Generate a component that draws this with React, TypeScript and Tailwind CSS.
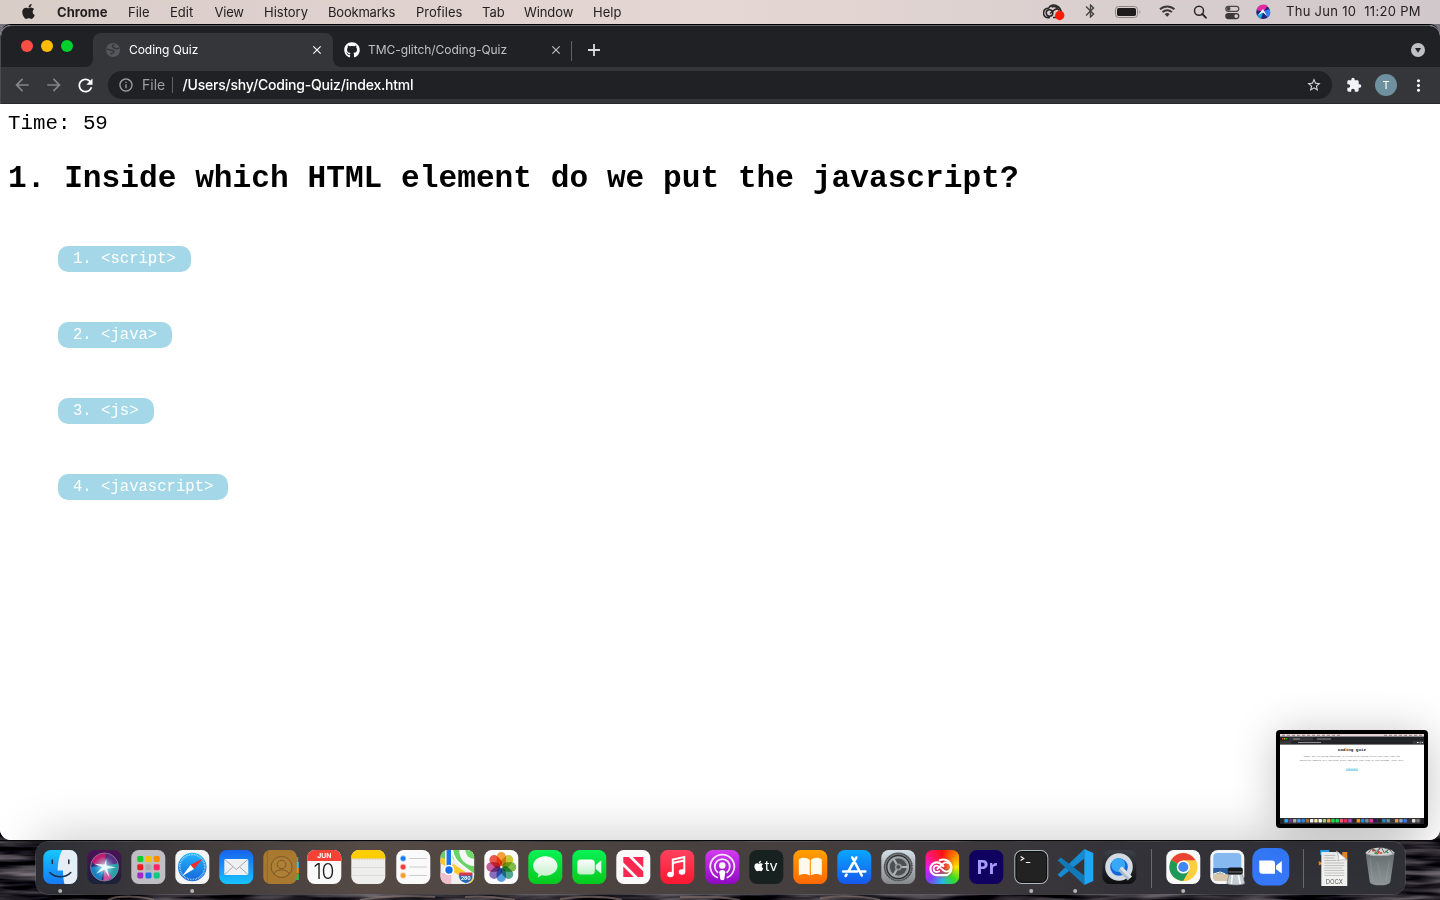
import React from "react";
import { FaApple, FaGithub } from "react-icons/fa";
import {
  MdArrowBack,
  MdArrowForward,
  MdBluetooth,
  MdClose,
  MdExtension,
  MdInfoOutline,
  MdMoreVert,
  MdRefresh,
  MdStarBorder,
} from "react-icons/md";

const menus = [
  { label: "Chrome", cls: "w-[71px] font-bold tracking-[0.05px]" },
  { label: "File", cls: "w-[42px]" },
  { label: "Edit", cls: "w-[44.5px]" },
  { label: "View", cls: "w-[49.5px] tracking-[-0.2px]" },
  { label: "History", cls: "w-[64px]" },
  { label: "Bookmarks", cls: "w-[88px] tracking-[-0.2px]" },
  { label: "Profiles", cls: "w-[66px]" },
  { label: "Tab", cls: "w-[42px]" },
  { label: "Window", cls: "w-[69px] tracking-[-0.1px]" },
  { label: "Help", cls: "w-[40px]" },
];

function MenuBar() {
  return (
    <header className="flex h-6 shrink-0 items-center bg-linear-to-r from-[#d9cdc8] via-[#e5d7d3] to-[#d0c8cb] text-[13px] text-[#242021]">
      <FaApple className="mt-[-1px] mr-[20px] ml-[20px] h-[17px] w-[17px]" />
      <nav className="flex pt-[2px]">
        {menus.map((m) => (
          <span key={m.label} className={m.cls}>
            {m.label}
          </span>
        ))}
      </nav>
      <div className="ml-auto flex items-center">
        <svg width="396" height="24" viewBox="0 0 396 24" className="mr-[-153px]" fill="none">
          <g stroke="#2b2627" strokeWidth="1.6" transform="translate(-1 1)">
            <path d="M8 16.5C4 17.5 1.500 15 1.500 12.300C1.500 9 4 7 6.500 7.200C8 3.800 13 3 16 5.500C18 7 19 9 19.500 11" />
            <circle cx="7.500" cy="12" r="3.300" />
            <path d="M8 12.500L13 8.500C15 7.400 16.500 8 17.500 9.500M9.500 6C12 4.800 14.500 5.600 16 7.500M11 16.500H14" />
          </g>
          <circle cx="16.700" cy="15.500" r="4.700" fill="#ff1a00" />
          <MdBluetooth x="39" y="2.500" size="17" color="#4a4546" />
          <rect x="72.500" y="6.500" width="22" height="11" rx="3" stroke="#8c8586" />
          <rect x="74" y="8" width="19" height="8" rx="1.800" fill="#1f1b1c" />
          <path d="M96.500 10.200c1.300.5 1.300 3.100 0 3.600z" fill="#8c8586" />
          <g stroke="#3c3738" strokeWidth="2" transform="translate(124.200 0)">
            <path d="M-7.200 9.300a10.500 10.500 0 0 1 14.400 0M-4.700 12.100a6.800 6.800 0 0 1 9.400 0" />
            <path d="M-2.500 14.300a3.600 3.600 0 0 1 5 0L0 16.700z" fill="#3c3738" stroke="none" />
          </g>
          <circle cx="156" cy="10.700" r="4.500" stroke="#2b2627" strokeWidth="1.500" />
          <path d="M159.300 14l3.600 3.700" stroke="#2b2627" strokeWidth="1.900" strokeLinecap="round" />
          <rect x="182.800" y="6.300" width="13" height="5" rx="2.500" stroke="#4a4546" strokeWidth="1.200" />
          <circle cx="185.500" cy="8.800" r="2" fill="#4a4546" />
          <rect x="182.200" y="13" width="14.200" height="6.200" rx="3.100" fill="#3c3738" />
          <circle cx="193.200" cy="16.100" r="1.900" fill="#d5cbcc" />
          <circle cx="220.200" cy="12" r="7" fill="#26257a" />
          <path d="M213.500 10a7 7 0 0 1 11-4.200l-4 6z" fill="#e32ba0" />
          <path d="M214 15a7 7 0 0 0 4 3.600l2.500-7z" fill="#1aa7e0" />
          <path d="M226.500 9a7 7 0 0 1-2 8.500l-4.500-6z" fill="#397ee8" />
          <path d="M215 15l5-6 4 7-4-3.500z" fill="#e9fbff" />
        </svg>
        <span className="w-[154px] whitespace-pre text-[13px] tracking-[0.3px]">Thu Jun 10  11:20 PM</span>
      </div>
    </header>
  );
}

function TabStrip() {
  return (
    <div className="flex h-[42px] items-end bg-[#202124]">
      <div className="flex h-[42px] w-[84px] items-center gap-2 pl-5">
        <i className="size-3 rounded-full bg-[#ff4f44]" />
        <i className="size-3 rounded-full bg-[#ffbd00]" />
        <i className="size-3 rounded-full bg-[#00d02b]" />
      </div>
      <svg width="8" height="8" className="shrink-0">
        <path d="M0 8A8 8 0 0 0 8 0V8z" fill="#35363a" />
      </svg>
      <div className="flex h-[34px] w-[240px] items-center rounded-t-lg bg-[#35363a] pl-[12px] text-[12px] text-white">
        <svg width="16" height="16" viewBox="0 0 16 16" className="mr-2 shrink-0">
          <circle cx="8" cy="8" r="7" fill="#55585d" />
          <path d="M1.500 7.500C4 6.500 4.500 8.500 7 8.300c2 0 2.300 1.800 1 2.600-1 .6-2.300.4-2.600 1.500M9.500 2.500C7 3 7 5 8.500 5.500s2 1.500 3.500 1.200l2-.5" stroke="#36373b" strokeWidth="1.700" fill="none" />
        </svg>
        <span className="tracking-[-0.05px]">Coding Quiz</span>
        <MdClose className="mr-[9px] ml-auto h-[14px] w-[14px] stroke-current" />
      </div>
      <svg width="8" height="8" className="shrink-0">
        <path d="M8 8A8 8 0 0 1 0 0V8z" fill="#35363a" />
      </svg>
      <div className="flex h-[34px] w-[230px] items-center pl-[3px] text-[12px] text-[#bdc1c6]">
        <FaGithub className="mr-2 h-4 w-4 text-white" />
        <span className="tracking-[-0.05px]">TMC-glitch/Coding-Quiz</span>
        <MdClose className="mr-[8px] ml-auto h-[14px] w-[14px] stroke-current" />
      </div>
      <i className="mb-[6px] h-5 w-px bg-[#5f6368]" />
      <svg width="12" height="12" className="mb-[11px] ml-[16px]">
        <path d="M6 0V12M0 6H12" stroke="#dadce0" strokeWidth="1.800" />
      </svg>
      <svg width="14" height="14" className="mr-[15px] mb-[10px] ml-auto">
        <circle cx="7" cy="7" r="7" fill="#bdc1c6" />
        <path d="M3.900 5h6.200L7 9.800z" fill="#202124" />
      </svg>
    </div>
  );
}

function Toolbar() {
  return (
    <div className="flex h-[37px] items-center border-b border-[#28272a] bg-[#35363a]">
      <MdArrowBack className="ml-[11px] h-5 w-5 text-[#828488]" />
      <MdArrowForward className="ml-[12px] h-5 w-5 text-[#828488]" />
      <MdRefresh className="ml-[11px] h-[21px] w-[21px] text-white" />
      <div className="ml-[12px] flex h-7 w-[1224px] items-center rounded-full bg-[#202124] text-[14px]">
        <MdInfoOutline className="ml-[10px] h-4 w-4 text-[#9aa0a6]" />
        <span className="mb-[2px] ml-2 w-[30px] text-[#9aa0a6]">File</span>
        <i className="h-4 w-px bg-[#5f6368]" />
        <span className="mb-[2px] ml-[9.5px] text-[14px] font-medium tracking-[-0.2px] text-white">/Users/shy/Coding-Quiz/index.html</span>
        <MdStarBorder className="mr-[10px] ml-auto h-4 w-4 text-[#d5d7da]" />
      </div>
      <MdExtension className="ml-[14px] h-4 w-4 text-[#f1f3f4]" />
      <span className="ml-[13px] flex size-[22px] items-center justify-center rounded-full bg-[#6f909f] text-[11px] text-white">T</span>
      <MdMoreVert className="ml-[12px] h-[19px] w-[19px] text-white" />
    </div>
  );
}

const answers = ["<script>", "<java>", "<js>", "<javascript>"];

function Quiz() {
  return (
    <main className="flex-1 bg-white pt-2 pl-2 font-['Courier_New','Liberation_Mono',monospace] text-black">
      <p className="h-[24px] text-[20.8px] leading-[24px]">Time: 59</p>
      <h1 className="mt-[25px] text-[31.2px] leading-[36px] font-bold whitespace-nowrap">
        1. Inside which HTML element do we put the javascript?
      </h1>
      <div className="mt-[49px] ml-[50px] flex flex-col items-start gap-[50px]">
        {answers.map((a, i) => (
          <button key={a} className="h-[26px] rounded-[10px] bg-[#a4d8e8] px-[15px] text-[15.6px] leading-[26px] text-white">
            {i + 1}. {a}
          </button>
        ))}
      </div>
    </main>
  );
}

const miniColors = ["#29a8f5", "#633d85", "#aaa", "#3e9bf0", "#2288ef", "#9b712d", "#eee", "#f4e7a4", "#fff", "#9fcc80", "#ef9f55", "#20d84b", "#20d84b", "#f35872", "#f32657", "#b342d0", "#222", "#f99121", "#168df2", "#888", "#e83a9a", "#251366", "#222", "#2485c4", "#68899d", "#33343a", "#dd9d53", "#87a6cf", "#3678ef", "#33343a", "#ddd", "#777"];

function Thumbnail() {
  return (
    <aside className="absolute top-[730px] left-[1276px] h-[98px] w-[152px] rounded-[4px] bg-black p-1 shadow-[0_4px_44px_rgba(0,0,0,0.24)]">
      <svg width="144" height="90" viewBox="0 0 144 90">
        <rect width="144" height="90" fill="#fff" />
        <rect width="144" height="2.500" fill="#e4d4d5" />
        <path d="M2 1.300H62M104 1.300H142" stroke="#8c7e80" strokeWidth="1" strokeDasharray="3 2" />
        <rect y="2.500" width="144" height="8" fill="#202124" />
        <rect x="9" y="3.500" width="24" height="3.200" fill="#35363a" />
        <rect y="6.700" width="144" height="3.500" fill="#35363a" />
        <rect x="11" y="7.200" width="122" height="2.600" rx="1.300" fill="#202124" />
        <path d="M13 5H20M37 5H51M18 8.500H41" stroke="#aaa" strokeWidth=".8" />
        <circle cx="2.700" cy="4.800" r=".8" fill="#ff4f44" />
        <circle cx="4.700" cy="4.800" r=".8" fill="#ffbd00" />
        <circle cx="6.700" cy="4.800" r=".8" fill="#00d02b" />
        <path d="M137 8.500h1.500M142 8.500h.8" stroke="#fff" />
        <circle cx="140.500" cy="8.500" r="1" fill="#7896a3" />
        <g fontFamily="Liberation Mono, monospace" textAnchor="middle" fill="#111">
          <text x="72" y="17" fontSize="4.200" fontWeight="700" textLength="28">Coding Quiz</text>
          <text x="72" y="22.700" fontSize="2" textLength="98" fill="#555">Answer the following questions in relation to coding before the time runs out.</text>
          <text x="72" y="27" fontSize="2" textLength="104" fill="#555">Incorrect answers will decrease score and dock your time by ten seconds. Good luck!</text>
        </g>
        <rect x="66" y="34.500" width="12" height="2.600" rx=".6" fill="#9edcec" />
        <rect y="84" width="144" height="6" fill="#21212a" />
        <rect x="3.600" y="84.300" width="137" height="5.200" rx="1" fill="#3d393b" />
        {miniColors.map((c, i) => (
          <rect key={i} x={4.5 + i * 4.25} y="85" width="3.400" height="3.400" rx=".7" fill={c} />
        ))}
      </svg>
    </aside>
  );
}

/* Every dock icon is drawn on a 34 by 34 grid. */
function Tile({ fill = "#fff" }: { fill?: string }) {
  return <rect width="34" height="34" rx="7.500" fill={fill} />;
}

const petals = [
  ["#f7941d", 0], ["#c9c417", 45], ["#72b52d", 90], ["#369c80", 135],
  ["#4493e3", 180], ["#7a5bb4", 225], ["#c4478e", 270], ["#ed3f38", 315],
] as const;

const apps: { name: string; open?: boolean; art: React.ReactNode }[] = [
  {
    name: "Finder", open: true,
    art: (
      <>
        <Tile fill="url(#finder)" />
        <path d="M19 0h7.500A7.500 7.500 0 0 1 34 7.500v19a7.500 7.500 0 0 1-7.500 7.500h-5.300c-.9-4-1.400-7-1.500-13.500h-5.400C14.500 13 16 5 19 0z" fill="#e6edf5" />
        <path d="M9 10v3.500M25.500 10v3.500M6.500 22.500c5.500 5.700 15.500 5.700 21 0" stroke="#17304a" strokeWidth="1.500" strokeLinecap="round" fill="none" />
      </>
    ),
  },
  {
    name: "Siri",
    art: (
      <>
        <Tile fill="url(#siribg)" />
        <circle cx="17.200" cy="17" r="14" fill="#33306a" />
        <g clipPath="url(#orb)">
          <path d="M17 16C11 15 4 14 3 10c3-6 10-9 16-7z" fill="#c31b6f" />
          <path d="M17 16l4-14c6 2 11 8 11 12z" fill="#5a2f86" />
          <path d="M17 16L3 17c0 8 6 14 11 14z" fill="#1581c4" />
          <path d="M17 16l15-3c1 9-3 15-8 17z" fill="#27a0a5" />
          <path d="M17 16l-1 15c4 0 8-1 8-5z" fill="#d04d9f" />
          <circle cx="17" cy="17" r="11" fill="url(#glow)" />
          <path d="M17 14.500l2-6 .3 7 9.500 2-9 1.200 2.500 9-5-8-8.500 4 6-6.500-8-3.500z" fill="#f1feff" opacity=".9" />
        </g>
        <circle cx="17.200" cy="17" r="14" fill="none" stroke="#8a859b" strokeWidth=".8" />
      </>
    ),
  },
  {
    name: "Launchpad",
    art: (
      <>
        <Tile fill="#bfbfc3" />
        {["#0cd128", "#ffbf00", "#ff8b00", "#f01a24", "#a9adb1", "#fa2866", "#a326cf", "#1a72f6", "#15c783"].map((c, i) => (
          <rect key={c} x={6 + (i % 3) * 8.2} y={6 + Math.floor(i / 3) * 8.2} width="6" height="6" rx="1.400" fill={c} />
        ))}
      </>
    ),
  },
  {
    name: "Safari", open: true,
    art: (
      <>
        <Tile fill="#f5f5f5" />
        <circle cx="17" cy="17" r="14.300" fill="url(#blue)" />
        <circle cx="17" cy="17" r="12.500" fill="none" stroke="#d4edff" strokeWidth="1.700" strokeDasharray=".6 1.030" />
        <path d="M27.500 8.500L15.200 15l3.500 4z" fill="#fa2924" />
        <path d="M7 26l8.200-11 3.500 4z" fill="#fff" />
      </>
    ),
  },
  {
    name: "Mail",
    art: (
      <>
        <Tile fill="url(#mail)" />
        <rect x="5" y="9" width="24" height="16" rx="1.500" fill="#eef0f2" />
        <path d="M5.500 9.500L17 19.500 28.500 9.500M5.500 24.500l8-7.500M28.500 24.500l-8-7.500" stroke="#a2abb3" fill="none" />
      </>
    ),
  },
  {
    name: "Contacts",
    art: (
      <>
        <path d="M30 7h5v5h-5z" fill="#888" />
        <path d="M30 12h5.500v6H30z" fill="#2fc5f4" />
        <path d="M30 18h5.500v5.500H30z" fill="#ff8700" />
        <path d="M30 24h5.500v6H30z" fill="#1ac951" />
        <rect width="33.500" height="34" rx="7" fill="#a97930" />
        <path d="M4 .8V33" stroke="#8a6225" strokeWidth=".8" />
        <circle cx="18.300" cy="17" r="10.500" fill="#ae7f37" stroke="#795722" />
        <circle cx="18.300" cy="14.500" r="4.300" fill="none" stroke="#795722" />
        <path d="M10.500 24c2-5.500 13.500-5.500 15.500 0" fill="none" stroke="#795722" />
      </>
    ),
  },
  {
    name: "Calendar",
    art: (
      <>
        <Tile fill="#fafafa" />
        <path d="M0 11V7.500A7.500 7.500 0 0 1 7.500 0h19A7.500 7.500 0 0 1 34 7.500V11z" fill="#f44336" />
        <text x="17" y="8.500" textAnchor="middle" fontSize="6.800" fontWeight="700" fill="#fff">JUN</text>
        <text x="16.500" y="29" textAnchor="middle" fontSize="21" fontWeight="300" letterSpacing="-.3" fill="#222">10</text>
      </>
    ),
  },
  {
    name: "Notes",
    art: (
      <>
        <Tile fill="#eeeeec" />
        <path d="M0 8.500v-1A7.500 7.500 0 0 1 7.500 0h19A7.500 7.500 0 0 1 34 7.500v1z" fill="#ffcd00" />
        <path d="M0 8.900h34" stroke="#b8a463" strokeWidth=".8" strokeDasharray=".8 .8" />
        <path d="M0 17.500h34M0 25.500h34" stroke="#d5d5d3" strokeWidth=".8" />
      </>
    ),
  },
  {
    name: "Reminders",
    art: (
      <>
        <Tile fill="#fafafa" />
        <path d="M13 8.500h17.500M13 17h17.500M13 25.500h17.500" stroke="#c6c6c6" strokeWidth=".9" />
        {["#147bf3", "#f33b34", "#f49b2e"].map((c, i) => (
          <circle key={c} cx="6.800" cy={8.5 + i * 8.5} r="2.300" fill={c} stroke={c} strokeOpacity=".4" strokeWidth="1.700" />
        ))}
      </>
    ),
  },
  {
    name: "Maps",
    art: (
      <g clipPath="url(#tile)">
        <Tile fill="#eff0ed" />
        <path d="M12 0h22v26L12 8z" fill="#6bd26a" />
        <path d="M19 0a15 15 0 0 0 15 16V0z" fill="#f5f7f5" />
        <path d="M25 0a9 9 0 0 0 9 9V0z" fill="#70d86a" />
        <path d="M12 0c1 12 10 15 22 25" stroke="#fff" strokeWidth="2" fill="none" />
        <path d="M0 9l34 23" stroke="#ffcb25" strokeWidth="6.500" />
        <path d="M0 23h11v11H0z" fill="#f1bfcb" />
        <path d="M0 0h5v9L0 7z" fill="#69cc68" />
        <path d="M8.500 0v20" stroke="#fff" strokeWidth="7" />
        <path d="M8.500 0v20" stroke="#1674ee" strokeWidth="4.500" />
        <circle cx="8.700" cy="20" r="5.300" fill="#fff" />
        <circle cx="8.700" cy="20" r="3.700" fill="#146ff0" />
        <path d="M19 23h13c2 7-2 9-6.500 10.500C21 32 17 29 19 23z" fill="#2668b5" stroke="#eee" strokeWidth=".6" />
        <path d="M19 22.500h13v3H19z" fill="#da3a48" />
        <text x="25.500" y="30" textAnchor="middle" fontSize="5" fontWeight="700" fill="#fff">280</text>
      </g>
    ),
  },
  {
    name: "Photos",
    art: (
      <>
        <Tile fill="#fcfcfc" />
        {petals.map(([c, a]) => (
          <rect key={a} x="12.300" y="2" width="9.400" height="14" rx="4.700" fill={c} opacity=".88" className="mix-blend-multiply" transform={`rotate(${a} 17 17)`} />
        ))}
      </>
    ),
  },
  {
    name: "Messages",
    art: (
      <>
        <Tile fill="url(#green)" />
        <path d="M17 6.300c6.800 0 12.200 4.300 12.200 9.700S23.800 25.700 17 25.700c-1.400 0-2.700-.2-4-.5-1 1.200-2.500 2-4 2.300.8-1 1.100-2.200 1-3.700C6.800 22 4.800 19.200 4.800 16c0-5.400 5.400-9.700 12.200-9.700z" fill="url(#bubble)" />
      </>
    ),
  },
  {
    name: "FaceTime",
    art: (
      <>
        <Tile fill="url(#green)" />
        <rect x="5" y="9.500" width="17.500" height="15" rx="3.500" fill="url(#bubble)" />
        <path d="M23.500 15l5.500-4.700v13.400L23.500 19z" fill="#e9f9ec" />
      </>
    ),
  },
  {
    name: "News",
    art: (
      <>
        <Tile fill="#fafafa" />
        <path d="M7 7h5.500L27 21.500V27h-5.500L7 12.500zM16.500 7H27v10.500zM7 16.500V27h10.500z" fill="#fa2850" />
      </>
    ),
  },
  {
    name: "Music",
    art: (
      <>
        <Tile fill="url(#music)" />
        <path d="M12.500 24V9.500L24 7v14.500M12.500 13l11.500-2.500" stroke="#fff" strokeWidth="2" fill="none" />
        <ellipse cx="10.200" cy="24.500" rx="3.300" ry="2.700" fill="#fff" />
        <ellipse cx="21.700" cy="22" rx="3.300" ry="2.700" fill="#fff" />
      </>
    ),
  },
  {
    name: "Podcasts",
    art: (
      <>
        <Tile fill="url(#purple)" />
        <path d="M12 27.500A12 12 0 1 1 22 27.500M12.200 22.300A7.500 7.500 0 1 1 21.800 22.300" stroke="#f6e4ff" strokeWidth="1.800" fill="none" strokeLinecap="round" />
        <circle cx="17" cy="15.500" r="3.200" fill="#fff" />
        <path d="M14 22.200c0-3 6-3 6 0l-1 6.800c-.4 1.600-3.600 1.600-4 0z" fill="#fff" />
      </>
    ),
  },
  {
    name: "TV",
    art: (
      <>
        <Tile fill="#17211f" />
        <FaApple x="3.500" y="10" size="12" color="#fff" />
        <text x="15.500" y="21.500" fontSize="14.500" letterSpacing="-.2" fill="#fff">tv</text>
      </>
    ),
  },
  {
    name: "Books",
    art: (
      <>
        <Tile fill="url(#orange)" />
        <path d="M16.500 10C13.500 7 8 7 5.500 9.500V25.500c3-2 8-2 11 0zM17.500 10c3-3 8.500-3 11-.5V25.500c-3-2-8-2-11 0z" fill="#fff8ed" />
      </>
    ),
  },
  {
    name: "App Store",
    art: (
      <>
        <Tile fill="url(#store)" />
        <path d="M15 7.500l9.500 18M19 7.500l-8 14M9.300 24.500L8.300 26M5.800 21.500h14M24 21.500h4" stroke="#fff" strokeWidth="2.600" strokeLinecap="round" fill="none" />
      </>
    ),
  },
  {
    name: "System Preferences",
    art: (
      <>
        <Tile fill="url(#silver)" />
        <circle cx="17" cy="17" r="14" fill="#76797b" stroke="#35383a" strokeWidth="1.200" />
        <circle cx="17" cy="17" r="14.300" fill="none" stroke="#bfc4c8" strokeWidth=".8" strokeDasharray="1 1" />
        <circle cx="17" cy="17" r="11.500" fill="#a6a9ab" stroke="#303335" strokeWidth="1.400" />
        <circle cx="17" cy="17" r="9" fill="#4d5052" stroke="#919597" strokeWidth="1.200" />
        <path d="M17 17l-5-8.500M17 17h10M17 17l-5 8.500" stroke="#b0b4b6" strokeWidth="2.200" />
        <circle cx="17" cy="17" r="3.500" fill="#919597" />
        <circle cx="17" cy="17" r="1.800" fill="#424547" />
      </>
    ),
  },
  {
    name: "Creative Cloud",
    art: (
      <g clipPath="url(#tile)">
        <foreignObject width="34" height="34">
          <div className="h-full w-full bg-[conic-gradient(from_0deg,#ff1010,#ff7a00,#ffe600,#34dc22,#21b9e9,#813df4,#ef19ec,#ff1668,#ff1010)]" />
        </foreignObject>
        <circle cx="17" cy="17" r="13" fill="url(#redglow)" />
        <g fill="none" stroke="#fff" strokeWidth="2.200" strokeLinecap="round">
          <path d="M14.500 10.300A8.200 8.200 0 1 1 21.500 25.200H11.500A6.400 6.400 0 0 1 11.500 12.400C14 12.400 16 14 18 16.200" />
          <path d="M14 21.300c-1 .6-1.700.7-2.500.7a3.200 3.200 0 0 1 0-6.400c3.400 0 5 6 9.700 6A4.600 4.600 0 1 0 18 13.500L12 19" strokeWidth="1.800" />
        </g>
      </g>
    ),
  },
  {
    name: "Premiere Pro",
    art: (
      <>
        <Tile fill="#100060" />
        <text x="17.500" y="24" textAnchor="middle" fontSize="19.500" fontWeight="700" fontFamily="Open Sans, sans-serif" fill="#a79aff">Pr</text>
      </>
    ),
  },
  {
    name: "Terminal", open: true,
    art: (
      <>
        <Tile fill="#aeb9bd" />
        <rect x="1" y="1" width="32" height="32" rx="6.500" fill="#111" />
        <rect x="2.300" y="2.300" width="29.400" height="29.400" rx="5" fill="#222223" />
        <path d="M6.300 6.500l3.200 2-3.200 2M11.500 12.500h4.500" stroke="#fff" strokeWidth="1.100" fill="none" />
      </>
    ),
  },
  {
    name: "Visual Studio Code", open: true,
    art: (
      <>
        <path d="M26 8.500L2.500 27.500-.8 24.700 26-1z" fill="#168bd2" />
        <path d="M-.8 10.300L2.500 7.500 26 25.500V35z" fill="#1278b8" />
        <path d="M26-1l9 4v28l-9 4z" fill="#22a5f4" />
      </>
    ),
  },
  {
    name: "QuickTime",
    art: (
      <>
        <Tile fill="url(#dark)" />
        <circle cx="16.700" cy="17" r="11.300" fill="#1266db" stroke="#d3dae3" strokeWidth="5" />
        <circle cx="16" cy="15" r="7" fill="#36a8f7" />
        <path d="M18 18.500l9.500 10" stroke="#aebac6" strokeWidth="5.500" />
        <path d="M18.500 17.500l10 10" stroke="#d9e0e7" strokeWidth="3" />
      </>
    ),
  },
];

const moreApps: typeof apps = [
  {
    name: "Google Chrome", open: true,
    art: (
      <>
        <Tile fill="#fafafa" />
        <circle cx="17" cy="17" r="14" fill="#ffcd40" />
        <path d="M17 17L4.900 10A14 14 0 0 1 29.100 10L29 10.500H17z" fill="#ea4335" />
        <path d="M4.900 10A14 14 0 0 0 17 31l6-10.500L17 17z" fill="#1b9a59" />
        <path d="M17 10.500h12.500A14 14 0 0 1 17 31l5.800-10z" fill="#ffcd40" />
        <circle cx="17" cy="17" r="6.600" fill="#fff" />
        <circle cx="17" cy="17" r="5.100" fill="#4285f4" />
      </>
    ),
  },
  {
    name: "Preview",
    art: (
      <>
        <Tile fill="#f4f5f7" />
        <rect x="3" y="3" width="28" height="28" rx="4" fill="#86b9ef" />
        <path d="M3 18h28v7H3z" fill="#295d9e" />
        <path d="M3 24l7-1 10 2 11-1v3.500a3.500 3.500 0 0 1-3.500 3.500h-21A3.500 3.500 0 0 1 3 27.500z" fill="#d8c6aa" />
        <path d="M3 24l7-2 5 2" stroke="#fff" fill="none" />
        <path d="M19 24h13l2.500 9.500c-4 2-14 2-18 0z" fill="#c5cdd3" stroke="#727c83" strokeWidth=".6" />
        <path d="M22 25l-1 9M28 25l2 9" stroke="#fff" strokeWidth="1.500" />
        <rect x="17.500" y="17.500" width="15" height="7" rx="2" fill="#161718" />
        <path d="M18 22h14" stroke="#999" strokeWidth=".7" />
      </>
    ),
  },
  {
    name: "Zoom",
    art: (
      <>
        <rect x="-2" y="-2" width="37" height="37.500" rx="11.500" fill="#3478f9" />
        <path d="M5 10.500h13a2.700 2.700 0 0 1 2.700 2.700v10.500H8A3 3 0 0 1 5 20.800zM21.800 15.500l5.700-4.500v12.500l-5.700-4.300z" fill="#fff" />
      </>
    ),
  },
];

const places: typeof apps = [
  {
    name: "Documents",
    art: (
      <>
        <path d="M2 0h9v5H2z" fill="#27a5ed" />
        <path d="M24 2h5v9h-5zM.5 11l4 2.500-4 2z" fill="#ef8b23" />
        <path d="M3 2h17l9 8v26H3z" fill="#f1f1f0" />
        <path d="M18 1c2 3 3 7 1.500 10 3-1.500 6-1.500 9.500-1z" fill="#fff" stroke="#aaa" strokeWidth=".7" />
        <path d="M6 5.500h11M6 8h10M6 10.500h12M6 13h20M6 15.500h20M6 18h18M6 20.500h20M6 23h20M6 25.500h20" stroke="#b8b8b6" strokeWidth=".8" />
        <text x="16" y="34" textAnchor="middle" fontSize="6" fill="#555">DOCX</text>
      </>
    ),
  },
  {
    name: "Trash",
    art: (
      <>
        <path d="M2.500 2.500C6-4 27-4 31 2.500L29.500 6h-25z" fill="#ddd" />
        <path d="M5 3l4-5 4 5 5-6 3 6 5-4 4 5M8-1l5 2 4-3M21-2l6 2" stroke="#555" strokeWidth=".8" fill="none" />
        <path d="M9 1l3-1M16 3h3M14 4l2-3" stroke="#d84732" strokeWidth="1.400" />
        <path d="M11 3l3 1M22 1l3 2" stroke="#218f62" strokeWidth="1.300" />
        <path d="M2.300 3c2 4 27 4 29 0L27 32c-1 4.500-19.500 4.500-20.500 0z" fill="url(#trash)" />
        <path d="M7 9l2 22M26 10l-3 20M14 12l3 15" stroke="#aab2b3" opacity=".3" />
        <path d="M2.300 3c2 3.500 27 3.500 29 0" stroke="#aab0b1" fill="none" />
      </>
    ),
  },
];

function DockItem({ app }: { app: (typeof apps)[number] }) {
  return (
    <svg viewBox="0 0 44.150 52" className="h-[52px] w-[44.15px] shrink-0" role="img">
      <g transform="translate(5.3 8)" fontFamily="Inter, sans-serif">{app.art}</g>
      {app.open && <circle cx="22.200" cy="49" r="2" fill="#b7b3b3" />}
    </svg>
  );
}

function Gradient({ id, from, to }: { id: string; from: string; to: string }) {
  return (
    <linearGradient id={id} x1="0" y1="0" x2="0" y2="1">
      <stop stopColor={from} />
      <stop offset="1" stopColor={to} />
    </linearGradient>
  );
}

function Definitions() {
  return (
    <svg className="absolute h-0 w-0">
      <defs>
        <Gradient id="finder" from="#18c6ff" to="#167af4" />
        <Gradient id="siribg" from="#4b1158" to="#192238" />
        <Gradient id="blue" from="#22b5ff" to="#1666d9" />
        <Gradient id="mail" from="#1763ee" to="#18c4ff" />
        <Gradient id="green" from="#08f356" to="#06c91d" />
        <Gradient id="bubble" from="#ffffff" to="#c1efc7" />
        <Gradient id="music" from="#ff425e" to="#fb1731" />
        <Gradient id="purple" from="#d33bf0" to="#8f09c1" />
        <Gradient id="orange" from="#ffa000" to="#ff6800" />
        <Gradient id="store" from="#08a7ff" to="#1757ee" />
        <Gradient id="silver" from="#d3dee6" to="#85878a" />
        <Gradient id="dark" from="#3c4147" to="#0c0d0e" />
        <Gradient id="trash" from="#697174" to="#8e9697" />
        <radialGradient id="glow">
          <stop stopColor="#d9fcff" stopOpacity=".9" />
          <stop offset="1" stopColor="#7adcf0" stopOpacity="0" />
        </radialGradient>
        <radialGradient id="redglow">
          <stop stopColor="#f0243c" />
          <stop offset=".6" stopColor="#f0243c" stopOpacity=".5" />
          <stop offset="1" stopColor="#f0243c" stopOpacity="0" />
        </radialGradient>
        <clipPath id="tile">
          <rect width="34" height="34" rx="7.500" />
        </clipPath>
        <clipPath id="orb">
          <circle cx="17.200" cy="17" r="14" />
        </clipPath>
      </defs>
    </svg>
  );
}

function Wallpaper() {
  return (
    <svg width="1440" height="900" viewBox="0 0 1440 900" className="absolute inset-0">
      <defs>
        <filter id="grain" x="0" y="0" width="100%" height="100%" colorInterpolationFilters="sRGB">
          <feTurbulence type="fractalNoise" baseFrequency=".014 .13" numOctaves="3" seed="7" />
          <feColorMatrix values="1 0 0 0 -.34  .95 0 0 0 -.33  .95 0 0 0 -.3  0 0 0 0 1" />
        </filter>
      </defs>
      <rect width="1440" height="900" fill="#211f29" />
      <rect y="830" width="1440" height="70" filter="url(#grain)" />
      <rect y="20" width="1440" height="20" fill="#77727e" />
      <path d="M108 900c10-5 35-4 46 0M360 900c20-4 45-5 75-3M465 897c22-2 35 1 50 3M560 899c30-4 50-2 62 1M680 897c25 0 40-1 60 3M820 898c20-3 45-2 60 2" stroke="#99847a" strokeWidth="2" fill="none" opacity=".6" />
      <path d="M0 840.500H1440" stroke="#08080a" strokeWidth="1.500" />
    </svg>
  );
}

function Dock() {
  return (
    <footer className="relative flex h-[60px] shrink-0 items-start pt-[2px] pl-[35.500px]">
      <div className="flex h-[52px] w-[1369px] items-center rounded-[13px] bg-linear-to-r from-[#2d2e35] via-[#37353a] to-[#303037] pl-[2px] shadow-[0_0_0_1px_rgba(100,100,105,0.55),0_-4px_50px_rgba(0,0,0,0.22)] from-0% via-55%">
        <div className="flex h-[52px] rounded-[12px] bg-linear-to-r from-[#5e504700] via-[#5e5047cc] to-[#5e504700] via-30%">
          {apps.map((a) => (
            <DockItem key={a.name} app={a} />
          ))}
        </div>
        <i className="ml-[9.500px] h-[39px] w-px shrink-0 bg-[#68686d]" />
        <div className="ml-[9.500px] flex">
          {moreApps.map((a) => (
            <DockItem key={a.name} app={a} />
          ))}
        </div>
        <i className="ml-[10px] h-[39px] w-px shrink-0 bg-[#68686d]" />
        <div className="ml-[9px] flex">
          {places.map((a) => (
            <DockItem key={a.name} app={a} />
          ))}
        </div>
      </div>
    </footer>
  );
}

export default function App() {
  return (
    <div className="relative flex h-[900px] w-[1440px] flex-col overflow-hidden font-['Inter','Liberation_Sans',sans-serif]">
      <Wallpaper />
      <Definitions />
      <div className="relative flex min-h-0 flex-1 flex-col">
        <MenuBar />
        <section className="flex flex-1 flex-col overflow-hidden rounded-[11px] border-t border-black bg-white">
          <div className="rounded-t-[10px] shadow-[inset_0_1px_0_#5f6063]">
            <div className="mt-px overflow-hidden rounded-t-[10px] border-l border-[#4a4b4f]">
              <div className="-mt-px">
                <TabStrip />
              </div>
              <Toolbar />
            </div>
          </div>
          <Quiz />
        </section>
      </div>
      <Dock />
      <Thumbnail />
    </div>
  );
}
